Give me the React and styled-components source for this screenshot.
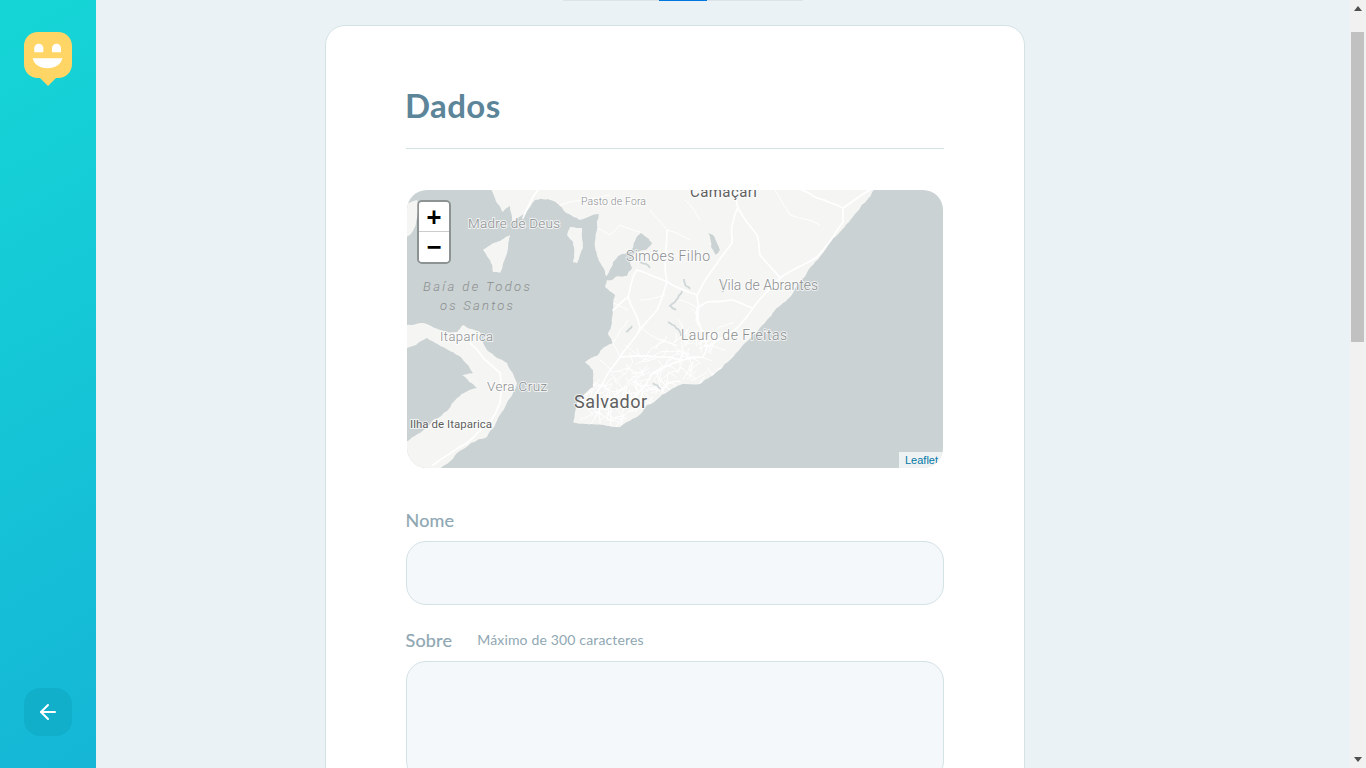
import React from "react";
import styled, { createGlobalStyle } from "styled-components";
import { ArrowLeft } from "lucide-react";

const GlobalStyle = createGlobalStyle`
  * {
    box-sizing: border-box;
  }
  html, body {
    margin: 0;
    padding: 0;
    height: 100%;
    overflow: hidden;
    background: #ebf2f5;
  }
  body, input, textarea {
    font-family: "Lato", "Noto Sans", sans-serif;
    color: #8fa7b3;
  }
`;

const Page = styled.div`
  display: flex;
  height: 100vh;
  overflow: hidden;
`;

// barra lateral
const Sidebar = styled.aside`
  width: 96px;
  flex-shrink: 0;
  padding: 32px 24px;
  display: flex;
  flex-direction: column;
  justify-content: space-between;
  background: linear-gradient(329.54deg, #15b6d6 0%, #15d6d6 100%);
`;

const BackButton = styled.button`
  width: 48px;
  height: 48px;
  border: 0;
  padding: 0;
  border-radius: 16px;
  background: #12afcb;
  color: #fff;
  display: flex;
  align-items: center;
  justify-content: center;
  cursor: pointer;
`;

const Main = styled.main`
  flex: 1;
  min-width: 0;
  padding-left: 229px;
  overflow: hidden;
`;

const Progress = styled.div`
  display: flex;
  width: 240px;
  height: 1px;
  margin-left: 238px;
`;

const ProgressPart = styled.span`
  width: ${(p) => p.$width}px;
  background: ${(p) => (p.$active ? "#0077dd" : "#dde3e8")};
`;

const Card = styled.form`
  width: 700px;
  margin-top: 24px;
  padding: 56px 80px 64px;
  background: #fff;
  border: 1px solid #d3e2e5;
  border-radius: 20px;
`;

const Title = styled.h1`
  margin: 0 0 41px;
  padding-bottom: 20px;
  border-bottom: 1px solid #d3e2e5;
  font-size: 33px;
  line-height: 46px;
  font-weight: 700;
  letter-spacing: 0.4px;
  color: #5c8599;
  text-indent: -1px;
`;

const MapFrame = styled.div`
  position: relative;
  height: 278px;
  margin: 0 1px 40px;
  border-radius: 20px;
  overflow: hidden;
  background: #cad2d3;
`;

const MapSvg = styled.svg`
  display: block;
  width: 100%;
  height: 100%;
`;

const MapLabel = styled.text`
  font-family: "Roboto", "Noto Sans", sans-serif;
  font-size: ${(p) => p.$size}px;
  font-style: ${(p) => (p.$italic ? "italic" : "normal")};
  font-weight: ${(p) => (p.$dark ? 400 : 300)};
  fill: ${(p) => (p.$dark ? "#5f5f5f" : "#8b8e8f")};
  stroke: rgba(255, 255, 255, ${(p) => (p.$italic ? 0 : 0.7)});
  stroke-width: 2px;
  paint-order: stroke;
`;

const ZoomControl = styled.div`
  position: absolute;
  left: 10px;
  top: 10px;
  width: 34px;
  border: 2px solid rgba(0, 0, 0, 0.3);
  border-radius: 5px;
  background-clip: padding-box;
`;

const ZoomButton = styled.a`
  display: block;
  height: 30px;
  background: #fff;
  border-bottom: ${(p) => (p.$last ? "none" : "1px solid #ccc")};
  border-radius: ${(p) => (p.$last ? "0 0 3px 3px" : "3px 3px 0 0")};
  font-family: "DejaVu Sans Mono", monospace;
  font-size: 24px;
  font-weight: 700;
  line-height: 30px;
  text-align: center;
  color: #000;
`;

const Attribution = styled.div`
  position: absolute;
  right: 0;
  bottom: 0;
  height: 16px;
  padding: 0 5px 0 6px;
  background: rgba(255, 255, 255, 0.7);
  font-family: "Liberation Sans", sans-serif;
  font-size: 11px;
  line-height: 17px;
  color: #0078a8;
`;

const Field = styled.div`
  margin-top: 23px;
`;

const Label = styled.label`
  display: flex;
  align-items: center;
  height: 24px;
  margin: 0 0 9px -0.5px;
  font-size: 18px;
  line-height: 24px;
  letter-spacing: 0.2px;
  color: #8fa7b3;
  -webkit-text-stroke: 0.2px #8fa7b3;
`;

const Hint = styled.span`
  margin-left: 25px;
  font-size: 14px;
  letter-spacing: 0.16px;
  color: #8fa7b3;
  -webkit-text-stroke: 0;
`;

const TextInput = styled.input`
  display: block;
  width: 100%;
  height: 64px;
  padding: 0 25px;
  background: #f5f8fa;
  border: 1px solid #d3e2e5;
  border-radius: 20px;
  outline: none;
`;

const TextArea = styled.textarea`
  display: block;
  width: 100%;
  height: 120px;
  padding: 16px 25px;
  background: #f5f8fa;
  border: 1px solid #d3e2e5;
  border-radius: 20px;
  outline: none;
  resize: none;
`;

// barra de rolagem
const Scrollbar = styled.div`
  width: 16px;
  flex-shrink: 0;
  display: flex;
  flex-direction: column;
  background: #f1f1f1;
`;

const ScrollArrow = styled.div`
  height: 17px;
  flex-shrink: 0;
  display: flex;
  align-items: center;
  justify-content: center;
`;

const ScrollTrack = styled.div`
  flex: 1;
  padding: 15px 2px 0 1px;
`;

const ScrollThumb = styled.div`
  height: 310px;
  background: #c1c1c1;
`;

// gerador fixo para o contorno da costa ficar sempre igual
let seed = 1234;
const rand = () => {
  seed = (seed * 16807) % 2147483647;
  return seed / 2147483647;
};

const parse = (s) => s.trim().split(/\s+/).map((p) => p.split(",").map(Number));

const roughen = (points, closed, amount = 0.16, rounds = 3) => {
  let pts = points;
  for (let r = 0; r < rounds; r++) {
    const next = [];
    const last = closed ? pts.length : pts.length - 1;
    for (let i = 0; i < last; i++) {
      const [x1, y1] = pts[i];
      const [x2, y2] = pts[(i + 1) % pts.length];
      const k = (rand() - 0.5) * amount;
      next.push([x1, y1], [(x1 + x2) / 2 - (y2 - y1) * k, (y1 + y2) / 2 + (x2 - x1) * k]);
    }
    if (!closed) next.push(pts[pts.length - 1]);
    pts = next;
  }
  return pts;
};

const toPath = (pts, closed) =>
  "M" + pts.map(([x, y]) => `${x.toFixed(1)} ${y.toFixed(1)}`).join("L") + (closed ? "Z" : "");

const shape = (s, amount) => toPath(roughen(parse(s), true, amount), true);
const line = (s, amount = 0.08, rounds = 2) => toPath(roughen(parse(s), false, amount, rounds), false);

const MAINLAND = shape(
  "490,185 877,185 857,212 840,232 823,253 810,268 798,285 783,303 767,320 745,343 730,360 710,377 702,383 680,385 660,397 637,417 620,427 603,425 587,424 573,422 577,403 593,387 593,370 585,362 598,355 603,348 613,343 608,333 612,323 613,310 615,295 605,287 607,280 598,258 595,247 597,230 599,214 580,220 565,212 558,204 548,199 535,200 525,214 512,222 510,206 503,212 497,203"
);

const LAND = [
  "510,235 508,248 500,273 493,272 490,260 483,250 497,242",
  "570,227 582,228 583,248 577,263 573,262 573,242 567,235",
  "404,325 423,323 440,330 457,332 463,325 480,332 487,350 507,363 517,383 513,393 500,415 487,437 457,453 437,472 404,472 404,443 420,433 433,420 448,410 457,398 477,388 462,375 473,373 463,360 443,347 427,338 404,350",
  "404,204 417,200 416,222 411,234 404,238",
].map((s) => shape(s));

// enseada e lagoas
const WATER = [
  "604,279 613,262 618,256 625,254 633,248 636,238 641,233 648,238 652,243 646,250 634,254 630,262 632,268 627,276 618,276 612,280",
  "708,233 714,236 720,250 716,255 711,247",
].map((s) => shape(s, 0.2));

const ROADS = [
  "637,270 667,282 697,295 710,273 732,243 732,225 738,208 733,190",
  "667,230 667,282 657,310 638,333 620,357 603,383 590,403",
  "738,208 757,235 760,255 780,278 803,265 817,257 843,222 843,208 870,190",
  "802,190 817,198 843,208",
  "780,278 753,308 737,328 727,335 707,347",
  "697,308 707,302 733,300 753,308",
  "697,295 698,320 707,347 703,357 683,360 653,373 637,395",
  "628,297 640,327 638,333",
  "613,310 628,297 633,277 637,270",
  "620,357 670,357 683,360",
  "470,343 500,373 500,403 490,423 467,443 433,465",
  "523,218 538,190",
].map((s) => line(s));

const STREETS = [
  "590,403 605,410 620,405 637,395",
  "585,395 600,385 615,395 630,380 650,372",
  "580,420 595,412 610,420 625,415 640,405",
  "603,383 610,395 607,420",
  "625,345 645,360 660,352 680,350",
  "640,327 660,340 675,345",
  "600,360 612,372 630,368",
  "630,380 645,392 660,385",
  "655,372 665,385",
  "620,357 612,340",
  "613,343 628,320",
  "640,300 665,295",
  "680,300 697,308 697,320",
  "683,380 690,365",
  "705,345 725,350",
  "595,228 610,235 620,225 640,232",
  "650,210 667,230 690,240",
  "700,220 685,200",
  "605,300 628,310",
  "560,205 585,200 610,195",
  "775,190 790,215 820,225",
].map((s) => line(s, 0.14));

// ruas miúdas concentradas em Salvador
const LOCAL_STREETS = Array.from({ length: 130 }, () => {
  const t = rand();
  const x = 585 + t * 125 + (rand() - 0.5) * 30;
  const y = 412 - t * 65 + (rand() - 0.5) * 55;
  const a = rand() * Math.PI * 2;
  const len = 8 + rand() * 14;
  return line(`${x},${y} ${x + Math.cos(a) * len},${y + Math.sin(a) * len}`, 0.3, 2);
});

const LAKES = [
  "682,291 676,300 670,306 676,310",
  "668,322 676,328 681,336",
  "632,326 626,332",
  "653,383 661,389",
  "719,279 724,286 722,292",
  "684,279 686,286 690,289",
  "640,262 650,268",
].map((s) => line(s, 0.3));

const LABELS = [
  { text: "Camaçari", x: 690, y: 197, size: 15, width: 67, dark: true },
  { text: "Pasto de Fora", x: 581, y: 205, size: 10.5, width: 65 },
  { text: "Madre de Deus", x: 468, y: 228, size: 13.5, width: 92 },
  { text: "Baía de Todos", x: 423, y: 291, size: 13, width: 107, italic: true },
  { text: "os Santos", x: 440, y: 310, size: 13, width: 73, italic: true },
  { text: "Simões Filho", x: 626, y: 261, size: 14, width: 84 },
  { text: "Vila de Abrantes", x: 719, y: 290, size: 14, width: 99 },
  { text: "Itaparica", x: 440, y: 341, size: 13, width: 53 },
  { text: "Lauro de Freitas", x: 681, y: 340, size: 14, width: 106 },
  { text: "Vera Cruz", x: 487, y: 391, size: 13.5, width: 60 },
  { text: "Salvador", x: 574, y: 408, size: 18, width: 73, dark: true },
  { text: "Ilha de Itaparica", x: 410, y: 428, size: 11.5, width: 82, dark: true },
];

function Logo() {
  return (
    <svg width="48" height="54" viewBox="0 0 48 54">
      <path
        d="M14 0H34C42 0 48 6 48 14V32C48 40 42 46 34 46H32L24 54L16 46H14C6 46 0 40 0 32V14C0 6 6 0 14 0Z"
        fill="#ffd666"
      />
      <path d="M10.3 20.3V16.3C10.3 13.8 12.3 11.8 14.8 11.8C17.3 11.8 19.3 13.8 19.3 16.3V20.3Z" fill="#fff" />
      <path d="M28 20.3V16.3C28 13.8 30 11.8 32.5 11.8C35 11.8 37 13.8 37 16.3V20.3Z" fill="#fff" />
      <path d="M8.7 26.3H38.3C37 32.5 31 36.3 23.5 36.3C16 36.3 10 32.5 8.7 26.3Z" fill="#fff" />
    </svg>
  );
}

function CityMap() {
  return (
    <MapSvg viewBox="407 190 536 278" preserveAspectRatio="none">
      <defs>
        <clipPath id="mainland">
          <path d={MAINLAND} />
        </clipPath>
      </defs>
      <path d={MAINLAND} fill="#f5f5f3" />
      {LAND.map((d) => (
        <path key={d} d={d} fill="#f5f5f3" />
      ))}
      {WATER.map((d) => (
        <path key={d} d={d} fill="#cad2d3" />
      ))}
      <g fill="none" stroke="#fff" strokeLinejoin="round" strokeLinecap="round">
        <g clipPath="url(#mainland)" strokeWidth="1">
          {LOCAL_STREETS.map((d) => (
            <path key={d} d={d} />
          ))}
          {STREETS.map((d) => (
            <path key={d} d={d} />
          ))}
        </g>
        {ROADS.map((d) => (
          <path key={d} d={d} strokeWidth="1.7" />
        ))}
      </g>
      <g fill="none" stroke="#d0d7d8" strokeWidth="1.8">
        {LAKES.map((d) => (
          <path key={d} d={d} />
        ))}
      </g>
      {LABELS.map((l) => (
        <MapLabel
          key={l.text}
          x={l.x}
          y={l.y}
          $size={l.size}
          $dark={l.dark}
          $italic={l.italic}
          textLength={l.width}
          lengthAdjust="spacing"
        >
          {l.text}
        </MapLabel>
      ))}
    </MapSvg>
  );
}

function Triangle({ down }) {
  return (
    <svg width="8" height="5" viewBox="0 0 8 5">
      <path d={down ? "M0 0H8L4 5Z" : "M0 5H8L4 0Z"} fill="#505050" />
    </svg>
  );
}

export default function App() {
  return (
    <Page>
      <GlobalStyle />
      <Sidebar>
        <Logo />
        <BackButton type="button" aria-label="Voltar">
          <ArrowLeft size={24} strokeWidth={2} />
        </BackButton>
      </Sidebar>
      <Main>
        <Progress>
          <ProgressPart $width={96} />
          <ProgressPart $width={48} $active />
          <ProgressPart $width={96} />
        </Progress>
        <Card>
          <Title>Dados</Title>
          <MapFrame>
            <CityMap />
            <ZoomControl>
              <ZoomButton>+</ZoomButton>
              <ZoomButton $last>−</ZoomButton>
            </ZoomControl>
            <Attribution>Leaflet</Attribution>
          </MapFrame>
          <Field>
            <Label htmlFor="nome">Nome</Label>
            <TextInput id="nome" />
          </Field>
          <Field>
            <Label htmlFor="sobre">
              Sobre<Hint>Máximo de 300 caracteres</Hint>
            </Label>
            <TextArea id="sobre" />
          </Field>
        </Card>
      </Main>
      <Scrollbar>
        <ScrollArrow>
          <Triangle />
        </ScrollArrow>
        <ScrollTrack>
          <ScrollThumb />
        </ScrollTrack>
        <ScrollArrow>
          <Triangle down />
        </ScrollArrow>
      </Scrollbar>
    </Page>
  );
}
